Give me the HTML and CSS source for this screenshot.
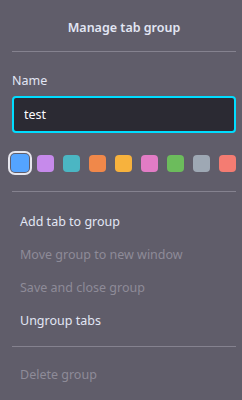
FILE: index.html
```html
<!DOCTYPE html>
<html lang="en">
  <head>
    <meta charset="UTF-8" />
    <meta name="viewport" content="width=device-width, initial-scale=1.0" />
    <title>Manage tab group</title>
    <link rel="stylesheet" href="styles.css">
  </head>
  <body>
    <div class="panel">
      <h1 class="title">Manage tab group</h1>
      <hr class="sep" />
      <label class="label" for="groupName">Name</label>
      <input id="groupName" class="nameInput" type="text" value="test" />
      <div class="swatches">
        <span class="swatch selected" style="background: #54a4ff"></span>
        <span class="swatch" style="background: #c68aeb"></span>
        <span class="swatch" style="background: #4bb6c3"></span>
        <span class="swatch" style="background: #f0884a"></span>
        <span class="swatch" style="background: #f7b23d"></span>
        <span class="swatch" style="background: #e27cc5"></span>
        <span class="swatch" style="background: #6cbc5c"></span>
        <span class="swatch" style="background: #9ea8b4"></span>
        <span class="swatch" style="background: #f47c72"></span>
      </div>
      <hr class="sep" />
      <ul class="menu">
        <li class="item">Add tab to group</li>
        <li class="item disabled">Move group to new window</li>
        <li class="item disabled">Save and close group</li>
        <li class="item">Ungroup tabs</li>
      </ul>
      <hr class="sep" />
      <ul class="menu last">
        <li class="item disabled">Delete group</li>
      </ul>
    </div>
  </body>
</html>
```

FILE: styles.css
```css
body {
  margin: 0;
  background: #605d6a;
  font-family: 'Noto Sans', 'Open Sans', sans-serif;
  font-size: 12.5px;
  color: #e2e6f4;
}

.panel {
  padding: 0 6px 0 12px;
}

.title {
  margin: 0;
  padding: 19px 0 0;
  height: 32px;
  text-align: center;
  font-size: 12.5px;
  font-weight: 600;
}

.sep {
  margin: 0;
  border: none;
  border-top: 1px solid #85828f;
}

.label {
  display: block;
  margin-top: 20px;
  height: 24px;
  line-height: 18px;
}

.nameInput {
  display: block;
  box-sizing: border-box;
  width: 224px;
  height: 37px;
  padding: 0 10px;
  border: 2px solid #00ddff;
  border-radius: 4px;
  background: #2b2a33;
  color: #fbfbfe;
  font-family: inherit;
  font-size: 12.5px;
  outline: none;
}

.swatches {
  display: flex;
  align-items: center;
  gap: 9px;
  height: 24px;
  margin: 18px 0 16px -1px;
}

.swatch {
  width: 17px;
  height: 17px;
  border-radius: 4px;
}

.swatch.selected {
  width: 18px;
  height: 18px;
  box-shadow: 0 0 0 1px #605d6a, 0 0 0 3px #e6e6ee;
  margin-right: -1px;
}

.menu {
  list-style: none;
  margin: 0;
  padding: 13px 0 9px;
}

.menu.last {
  padding-top: 11px;
}

.item {
  height: 33px;
  line-height: 33px;
  padding-left: 8px;
}

.item.disabled {
  color: #8e8b98;
}
```
